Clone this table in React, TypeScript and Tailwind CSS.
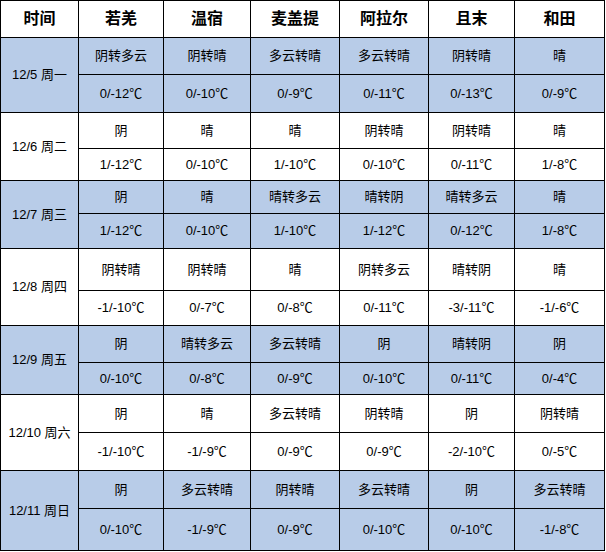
import React from "react";

const cities = ["若羌", "温宿", "麦盖提", "阿拉尔", "且末", "和田"];

type Day = { date: string; weather: string[]; temp: string[]; blue: boolean };

const days: Day[] = [
  {
    date: "12/5 周一",
    weather: ["阴转多云", "阴转晴", "多云转晴", "多云转晴", "阴转晴", "晴"],
    temp: ["0/-12℃", "0/-10℃", "0/-9℃", "0/-11℃", "0/-13℃", "0/-9℃"],
    blue: true,
  },
  {
    date: "12/6 周二",
    weather: ["阴", "晴", "晴", "阴转晴", "阴转晴", "晴"],
    temp: ["1/-12℃", "0/-10℃", "1/-10℃", "0/-10℃", "0/-11℃", "1/-8℃"],
    blue: false,
  },
  {
    date: "12/7 周三",
    weather: ["阴", "晴", "晴转多云", "晴转阴", "晴转多云", "晴"],
    temp: ["1/-12℃", "0/-10℃", "1/-10℃", "1/-12℃", "0/-12℃", "1/-8℃"],
    blue: true,
  },
  {
    date: "12/8 周四",
    weather: ["阴转晴", "阴转晴", "晴", "阴转多云", "晴转阴", "晴"],
    temp: ["-1/-10℃", "0/-7℃", "0/-8℃", "0/-11℃", "-3/-11℃", "-1/-6℃"],
    blue: false,
  },
  {
    date: "12/9 周五",
    weather: ["阴", "晴转多云", "多云转晴", "阴", "晴转阴", "阴"],
    temp: ["0/-10℃", "0/-8℃", "0/-9℃", "0/-10℃", "0/-11℃", "0/-4℃"],
    blue: true,
  },
  {
    date: "12/10 周六",
    weather: ["阴", "晴", "多云转晴", "阴转晴", "阴", "阴转晴"],
    temp: ["-1/-10℃", "-1/-9℃", "0/-9℃", "0/-9℃", "-2/-10℃", "0/-5℃"],
    blue: false,
  },
  {
    date: "12/11 周日",
    weather: ["阴", "多云转晴", "阴转晴", "多云转晴", "阴", "多云转晴"],
    temp: ["0/-10℃", "-1/-9℃", "0/-9℃", "0/-10℃", "0/-10℃", "-1/-8℃"],
    blue: true,
  },
];

export default function App() {
  return (
    <div className="bg-white w-[606px] h-[552px] font-['Liberation_Sans','Noto_Sans_CJK_SC',sans-serif]">
      <div className="grid w-[605px] bg-black gap-px p-px text-black grid-cols-[77px_84px_86px_88px_88px_85px_89px] grid-rows-[36px_36px_37px_35px_31px_32px_34px_41px_34px_36px_31px_37px_37px_37px_41px]">
        <div className="bg-white flex items-center justify-center text-[16px] font-bold">时间</div>
        {cities.map((c) => (
          <div key={c} className="bg-white flex items-center justify-center text-[16px] font-bold">
            {c}
          </div>
        ))}
        {days.map((d) => {
          const bg = d.blue ? "bg-[#b8cce8]" : "bg-white";
          return (
            <React.Fragment key={d.date}>
              <div className={`${bg} row-span-2 flex items-center justify-center text-[13px]`}>
                {d.date}
              </div>
              {d.weather.map((w, j) => (
                <div key={"w" + j} className={`${bg} flex items-center justify-center text-[13px]`}>
                  {w}
                </div>
              ))}
              {d.temp.map((t, j) => (
                <div key={"t" + j} className={`${bg} flex items-center justify-center text-[13px]`}>
                  {t}
                </div>
              ))}
            </React.Fragment>
          );
        })}
      </div>
    </div>
  );
}
